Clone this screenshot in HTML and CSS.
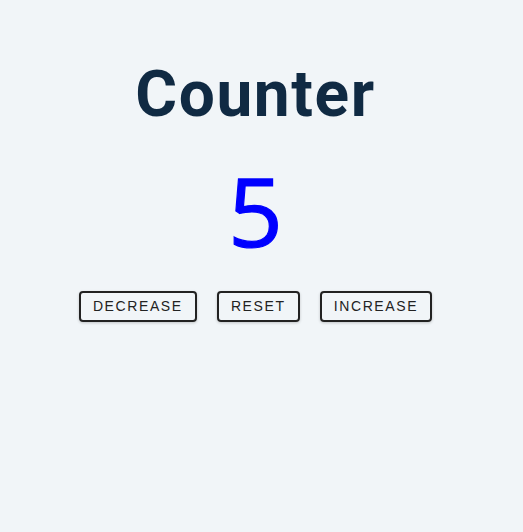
FILE: index.html
```html
<!DOCTYPE html>
<html lang="en">
<head>
<meta charset="utf-8">
<title>Counter</title>
<link rel="stylesheet" href="styles.css">
</head>
<body>
<main class="page">
  <div class="container">
    <h1 class="title">Counter</h1>
    <span class="value">5</span>
    <div class="button-row">
      <button class="btn">decrease</button>
      <button class="btn">reset</button>
      <button class="btn">increase</button>
    </div>
  </div>
</main>
</body>
</html>
```
FILE: styles.css
```css
* { box-sizing: border-box; }
html, body { margin: 0; padding: 0; }
body {
  background: #f1f5f8;
  font-family: "Open Sans", sans-serif;
  color: #102a43;
}
.page {
  min-height: 100vh;
  padding-right: 12px;
}
.container {
  text-align: center;
  padding-top: 55px;
}
.title {
  margin: 0;
  font-family: Roboto, sans-serif;
  font-weight: 700;
  font-size: 64px;
  line-height: 1.25;
  letter-spacing: 1.6px;
  color: #102a43;
}
.value {
  display: block;
  margin-top: 10px;
  font-family: "Open Sans", sans-serif;
  font-size: 96px;
  font-weight: 400;
  line-height: 1.362;
  color: #0000ff;
  -webkit-text-stroke: 1.2px #0000ff;
}
.button-row {
  margin-top: 7px;
}
.btn {
  display: inline-block;
  margin: 8px;
  padding: 6px 12px;
  font-family: "Liberation Sans", Arial, sans-serif;
  font-size: 14px;
  line-height: 15px;
  text-transform: uppercase;
  letter-spacing: 1.6px;
  color: #222;
  background: transparent;
  border: 2px solid #222;
  border-radius: 4px;
  box-shadow: 0 1px 3px rgba(0, 0, 0, 0.2);
  cursor: pointer;
}
```
